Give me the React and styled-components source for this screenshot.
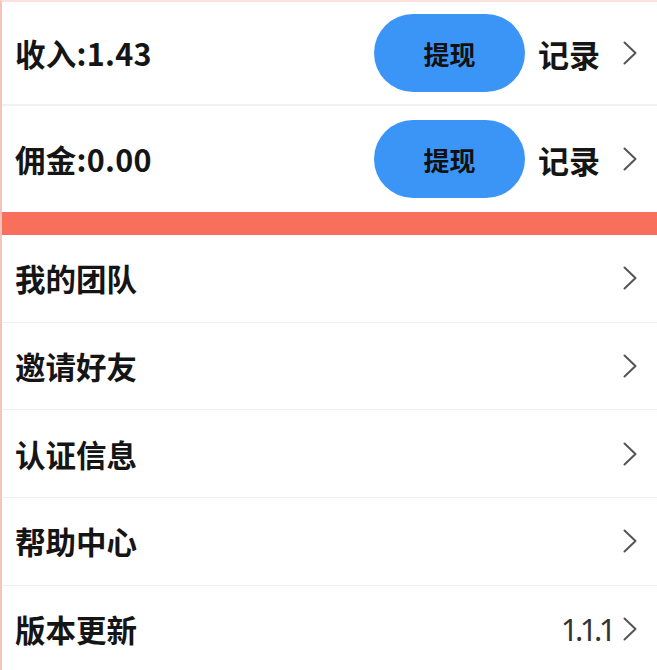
import React from "react";
import styled, { createGlobalStyle } from "styled-components";

const Global = createGlobalStyle`
  html, body { margin: 0; padding: 0; background: #fff; overflow: hidden; }
  body { font-family: "Noto Sans CJK SC", "Noto Sans", sans-serif; }
`;

const Page = styled.div`
  width: 657px;
  height: 670px;
  box-sizing: border-box;
  border-left: 2px solid #f5c3bb;
  border-top: 2px solid #fce2dd;
  background: #fff;
  overflow: hidden;
`;

const AccountRow = styled.div`
  height: ${(p) => p.$h}px;
  box-sizing: border-box;
  display: flex;
  align-items: center;
  padding: 0 20px 0 13px;
  border-bottom: ${(p) => (p.$divider ? "2px solid #f1f1f1" : "none")};
`;

const Label = styled.span`
  font-family: "Noto Sans CJK SC", sans-serif;
  font-weight: 700;
  font-size: 30.5px;
  color: #151515;
  flex: 1;
`;

const AmountLabel = styled(Label)`
  letter-spacing: 0.3px;
`;

const WithdrawButton = styled.button`
  width: 151px;
  height: 78px;
  border: none;
  border-radius: 39px;
  background: #3b95f7;
  color: #111;
  font-family: "Noto Sans CJK SC", sans-serif;
  font-weight: 700;
  font-size: 26px;
  padding: 0;
  margin-right: 13px;
  cursor: pointer;
`;

const RecordLink = styled.span`
  font-family: "Noto Sans CJK SC", sans-serif;
  font-weight: 700;
  font-size: 31px;
  color: #151515;
  margin-right: 23px;
`;

const Band = styled.div`
  height: 23px;
  background: #f8705c;
`;

const ListRow = styled.div`
  height: 87.7px;
  box-sizing: border-box;
  display: flex;
  align-items: center;
  padding: 0 20px 0 13px;
  border-bottom: 1.5px solid #efefef;
`;

const Value = styled.span`
  font-family: "Noto Sans", sans-serif;
  font-size: 31px;
  letter-spacing: -3.5px;
  color: #333;
  margin-right: 10px;
`;

const Chevron = () => (
  <svg width="14" height="24" viewBox="0 0 14 24" fill="none">
    <polyline
      points="1.5,1.5 12.5,12 1.5,22.5"
      stroke="#555"
      strokeWidth="2"
      strokeLinecap="round"
      strokeLinejoin="round"
    />
  </svg>
);

const accounts = [
  { label: "收入:1.43", h: 104, divider: true },
  { label: "佣金:0.00", h: 106, divider: false },
];

const items = [
  { label: "我的团队" },
  { label: "邀请好友" },
  { label: "认证信息" },
  { label: "帮助中心" },
  { label: "版本更新", value: "1.1.1" },
];

export default function App() {
  return (
    <>
      <Global />
      <Page>
        {accounts.map((a) => (
          <AccountRow key={a.label} $h={a.h} $divider={a.divider}>
            <AmountLabel>{a.label}</AmountLabel>
            <WithdrawButton>提现</WithdrawButton>
            <RecordLink>记录</RecordLink>
            <Chevron />
          </AccountRow>
        ))}
        <Band />
        {items.map((it) => (
          <ListRow key={it.label}>
            <Label>{it.label}</Label>
            {it.value && <Value>{it.value}</Value>}
            <Chevron />
          </ListRow>
        ))}
      </Page>
    </>
  );
}
